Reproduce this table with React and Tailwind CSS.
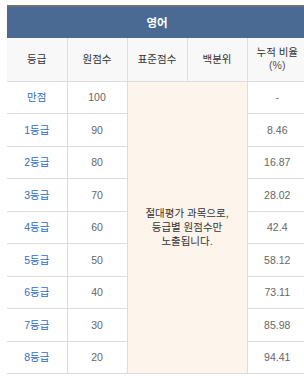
import React from 'react';

const rows = [
  { grade: '만점', raw: '100', ratio: '-' },
  { grade: '1등급', raw: '90', ratio: '8.46' },
  { grade: '2등급', raw: '80', ratio: '16.87' },
  { grade: '3등급', raw: '70', ratio: '28.02' },
  { grade: '4등급', raw: '60', ratio: '42.4' },
  { grade: '5등급', raw: '50', ratio: '58.12' },
  { grade: '6등급', raw: '40', ratio: '73.11' },
  { grade: '7등급', raw: '30', ratio: '85.98' },
  { grade: '8등급', raw: '20', ratio: '94.41' },
];

const App = () => {
  return (
    <div
      className="w-[304px] h-[381px] overflow-hidden bg-white pt-[5px] pl-[7px]"
      style={{ fontFamily: '"Liberation Sans", "Noto Sans CJK KR", sans-serif' }}
    >
      <table className="w-[300px] table-fixed border-collapse text-[10.5px] leading-[14px]">
        <colgroup>
          <col className="w-[60px]" />
          <col className="w-[60px]" />
          <col className="w-[60px]" />
          <col className="w-[60px]" />
          <col className="w-[60px]" />
        </colgroup>
        <thead>
          <tr>
            <th
              colSpan={5}
              className="h-[32px] border-t-2 border-[#707070] bg-[#4b6a93] text-[11.5px] font-bold text-white"
            >
              영어
            </th>
          </tr>
          <tr className="bg-[#f8f8f8] text-[#333]">
            <th className="h-[43px] border-r border-b border-[#dcdcdc] font-normal">등급</th>
            <th className="border-r border-b border-[#dcdcdc] font-normal">원점수</th>
            <th className="border-r border-b border-[#dcdcdc] font-normal">표준점수</th>
            <th className="border-r border-b border-[#dcdcdc] font-normal">백분위</th>
            <th className="border-b border-[#dcdcdc] font-normal leading-[13px]">
              누적 비율
              <br />
              <span className="text-[#555]">(%)</span>
            </th>
          </tr>
        </thead>
        <tbody>
          {rows.map((row, i) => (
            <tr key={row.grade}>
              <td className="h-[32.5px] border-r border-b border-[#dcdcdc] text-center text-[#2e6cc4]">
                {row.grade}
              </td>
              <td className="border-r border-b border-[#dcdcdc] text-center text-[#666]">{row.raw}</td>
              {i === 0 && (
                <td
                  colSpan={2}
                  rowSpan={9}
                  className="border-r border-b border-[#dcdcdc] bg-[#fdf4eb] text-center text-[#333] leading-[14px]"
                >
                  절대평가 과목으로,
                  <br />
                  등급별 원점수만
                  <br />
                  노출됩니다.
                </td>
              )}
              <td className="border-b border-[#dcdcdc] text-center text-[#666]">{row.ratio}</td>
            </tr>
          ))}
        </tbody>
      </table>
    </div>
  );
};

export default App;
